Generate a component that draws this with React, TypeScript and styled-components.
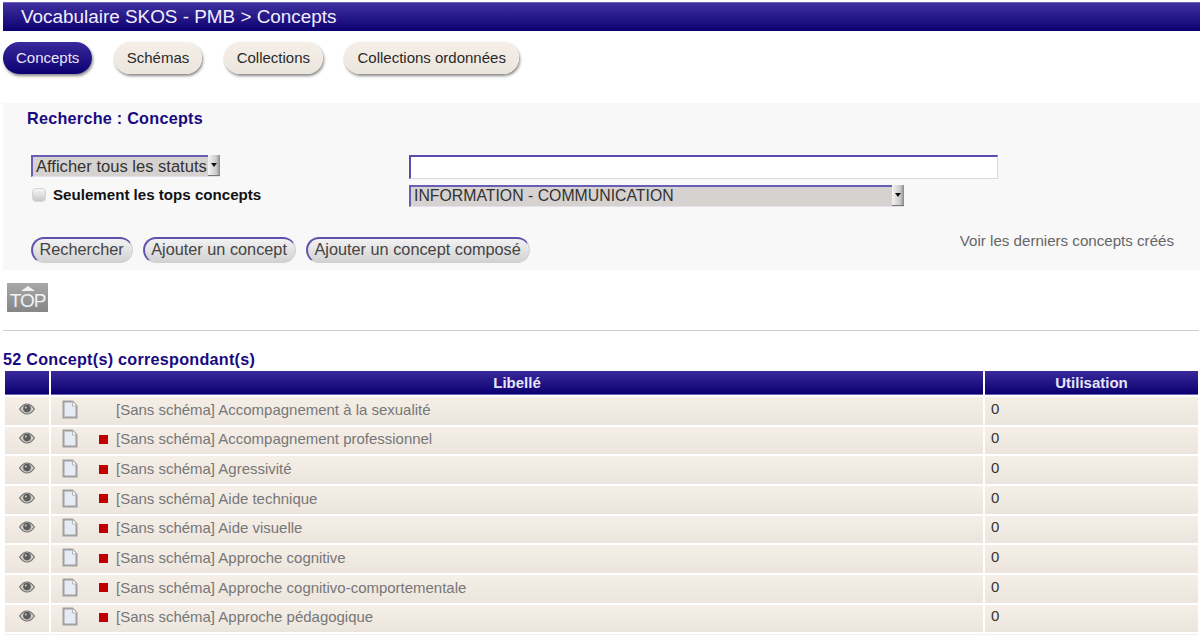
import React, { FC } from 'react';
import styled, { createGlobalStyle } from 'styled-components';

const GlobalStyle = createGlobalStyle`
  html, body {
    margin: 0;
    padding: 0;
    background: #fff;
    overflow: hidden;
  }
  body {
    font-family: "Liberation Sans", Arial, sans-serif;
  }
`;

const Page = styled.div`
  height: 635px;
  overflow: hidden;
  padding: 2px 0 0 3px;
  box-sizing: border-box;
`;

const TitleBar = styled.div`
  height: 29px;
  line-height: 28px;
  padding-left: 18px;
  font-size: 18.9px;
  color: #f0eeff;
  background: linear-gradient(#40309f, #0c0070);
  border-top: 1px solid #6f63bd;
  box-sizing: border-box;
`;

const Tabs = styled.nav`
  display: flex;
  gap: 21.4px;
  margin-top: 11px;
`;

const Tab = styled.a<{ $active?: boolean }>`
  display: block;
  height: 32px;
  line-height: 31px;
  padding: 0 13px;
  font-size: 15px;
  border-radius: 16px;
  box-sizing: border-box;
  color: ${(p) => (p.$active ? '#e8e6f8' : '#2a2a2a')};
  background: ${(p) =>
    p.$active ? 'linear-gradient(#3a2a9c, #0c0070)' : 'linear-gradient(#f5efe8, #ebe5de)'};
  box-shadow: 1px 2px 3px #888;
`;

const SearchPanel = styled.section`
  margin-top: 29px;
  height: 167px;
  box-sizing: border-box;
  padding: 6px 26px 0 24px;
  background: #f8f8f8;
`;

const PanelTitle = styled.h3`
  margin: 0;
  font-size: 16.2px;
  line-height: 18px;
  font-weight: bold;
  letter-spacing: 0.25px;
  color: #1a0a80;
`;

const FormGrid = styled.div`
  display: grid;
  grid-template-columns: 378px 1fr;
  row-gap: 6px;
  margin: 28px 0 0 4px;
`;

const SelectBox = styled.div<{ $width: number; $size: number; $line: number }>`
  display: flex;
  justify-content: space-between;
  width: ${(p) => p.$width}px;
  height: 22px;
  box-sizing: border-box;
  background: #d6d2d0;
  border-top: 2px solid #6a5db5;
  border-left: 2px solid #6a5db5;
  border-bottom: 1px solid #e2e0ea;
  font-size: ${(p) => p.$size}px;
  color: #333;
  line-height: ${(p) => p.$line}px;
  padding-left: 3px;
`;

const SelectArrow = styled.span`
  display: flex;
  align-items: center;
  justify-content: center;
  width: 12px;
  margin-top: -2px;
  background: linear-gradient(90deg, #f4f4f4, #c8c8c8 70%, #8a8a8a);
  border-bottom: 1px solid #777;
  &::before {
    content: '';
    border-left: 3px solid transparent;
    border-right: 3px solid transparent;
    border-top: 4px solid #111;
  }
`;

const TextField = styled.input`
  display: block;
  width: 589px;
  height: 24px;
  box-sizing: border-box;
  background: #fff;
  border: 1px solid #d8d8e2;
  border-top: 2px solid #5a4cab;
  border-left: 2px solid #5a4cab;
  outline: none;
  padding: 0;
`;

const CheckRow = styled.label`
  display: flex;
  align-items: center;
  height: 21px;
  box-sizing: border-box;
  padding-bottom: 2px;
  font-size: 15.12px;
  font-weight: bold;
  color: #111;
`;

const CheckBox = styled.input`
  appearance: none;
  flex: none;
  width: 14px;
  height: 14px;
  margin: 0 7px 0 1px;
  box-sizing: border-box;
  border-radius: 4px;
  border: 1px solid #d4d4d4;
  background: linear-gradient(#f6f6f6, #c8c8c8);
`;

const ActionRow = styled.div`
  display: flex;
  justify-content: space-between;
  margin: 30px 0 0 4px;
`;

const ButtonGroup = styled.div`
  display: flex;
  gap: 9.5px;
`;

const ActionButton = styled.button`
  height: 26px;
  padding: 0 8.5px 2px 6.5px;
  box-sizing: border-box;
  border-radius: 13px;
  border: 1px solid #d0d0d0;
  border-top: 2px solid #5f52ad;
  border-left: 2px solid #5f52ad;
  background: linear-gradient(#f2f2f2, #d2d2d2);
  font-family: inherit;
  font-size: 16.3px;
  color: #444;
  white-space: nowrap;
`;

const RecentLink = styled.a`
  font-size: 15.12px;
  line-height: 20px;
  margin-top: -6px;
  color: #666;
`;

const TopLink = styled.a`
  display: flex;
  flex-direction: column;
  align-items: center;
  width: 41px;
  height: 29px;
  margin: 13px 0 0 4px;
  box-sizing: border-box;
  padding-top: 3px;
  background: linear-gradient(#a8a8a8, #868686);
  color: #f2f2f2;
  font-size: 19px;
  line-height: 18px;
  letter-spacing: -1px;
  &::before {
    content: '';
    border-left: 7px solid transparent;
    border-right: 7px solid transparent;
    border-bottom: 5px solid #f2f2f2;
    margin-bottom: 1px;
  }
`;

const Divider = styled.hr`
  height: 1px;
  border: 0;
  margin: 18px 1px 0 0;
  background: #ccc;
`;

const ResultCount = styled.h3`
  margin: 19px 0 0;
  font-size: 16.2px;
  line-height: 18px;
  font-weight: bold;
  letter-spacing: 0.25px;
  color: #1a0a80;
`;

const Table = styled.table`
  width: 1197px;
  margin-top: 1px;
  table-layout: fixed;
  border-collapse: separate;
  border-spacing: 2px;
`;

const HeadCell = styled.th`
  height: 24px;
  padding: 0 0 1px;
  font-size: 15px;
  font-weight: bold;
  color: #e6e4f8;
  background: linear-gradient(#3a2a9c, #0c0070);
  border-bottom: 1px solid #6f63bd;
  box-sizing: border-box;
`;

const Cell = styled.td`
  height: 27.67px;
  padding: 0;
  box-sizing: border-box;
  background: linear-gradient(#f5efe8, #ebe5de);
  font-size: 14.976px;
  color: #777;
  vertical-align: middle;
`;

const IconCell = styled(Cell)`
  text-align: center;
  line-height: 0;
  padding-bottom: 4px;
`;

const LabelRow = styled.div`
  display: flex;
  align-items: center;
  height: 100%;
  padding: 0 0 3px 10px;
`;

const DocIcon = styled.svg`
  flex: none;
  width: 18px;
  height: 19px;
`;

const StatusSlot = styled.span<{ $flagged?: boolean }>`
  flex: none;
  width: 9px;
  height: 9px;
  margin: 1px 8px 0 20px;
  background: ${(p) => (p.$flagged ? '#c00000' : 'transparent')};
`;

const UsageCount = styled.span`
  display: block;
  padding: 0 0 5px 6px;
  color: #333;
`;

const Eye: FC = () => (
  <svg width="16" height="12" viewBox="0 0 16 12">
    <path d="M.5 6C3 2.4 5.4 1 8 1s5 1.4 7.5 5C13 9.6 10.6 11 8 11S3 9.6.5 6z" fill="#d0ccc6" stroke="#707070" strokeWidth="1.1" />
    <circle cx="8" cy="5.6" r="3.8" fill="#5c5c5c" />
    <circle cx="6.8" cy="4.4" r="1" fill="#ccc" />
  </svg>
);

const Doc: FC = () => (
  <DocIcon viewBox="0 0 18 19">
    <path d="M2.5 1.5h9l4 4.5v11.5h-13z" fill="#e6ebf4" stroke="#a0a0a0" strokeWidth="2" />
    <path d="M11.5 1.5V6h4" fill="#fff" stroke="#b4b4b4" strokeWidth="1" />
  </DocIcon>
);

const rows = [
  { label: 'Accompagnement à la sexualité', flagged: false },
  { label: 'Accompagnement professionnel', flagged: true },
  { label: 'Agressivité', flagged: true },
  { label: 'Aide technique', flagged: true },
  { label: 'Aide visuelle', flagged: true },
  { label: 'Approche cognitive', flagged: true },
  { label: 'Approche cognitivo-comportementale', flagged: true },
  { label: 'Approche pédagogique', flagged: true },
];

const App: FC = () => {
  return (
    <Page>
      <GlobalStyle />
      <TitleBar>Vocabulaire SKOS - PMB &gt; Concepts</TitleBar>
      <Tabs>
        <Tab $active>Concepts</Tab>
        <Tab>Schémas</Tab>
        <Tab>Collections</Tab>
        <Tab>Collections ordonnées</Tab>
      </Tabs>

      <SearchPanel>
        <PanelTitle>Recherche : Concepts</PanelTitle>
        <FormGrid>
          <SelectBox $width={189} $size={16.56} $line={19}>
            Afficher tous les statuts
            <SelectArrow />
          </SelectBox>
          <TextField type="text" />
          <CheckRow>
            <CheckBox type="checkbox" />
            Seulement les tops concepts
          </CheckRow>
          <SelectBox $width={495} $size={15.84} $line={18}>
            INFORMATION - COMMUNICATION
            <SelectArrow />
          </SelectBox>
        </FormGrid>
        <ActionRow>
          <ButtonGroup>
            <ActionButton>Rechercher</ActionButton>
            <ActionButton>Ajouter un concept</ActionButton>
            <ActionButton>Ajouter un concept composé</ActionButton>
          </ButtonGroup>
          <RecentLink>Voir les derniers concepts créés</RecentLink>
        </ActionRow>
      </SearchPanel>

      <TopLink>TOP</TopLink>
      <Divider />
      <ResultCount>52 Concept(s) correspondant(s)</ResultCount>
      <Table>
        <colgroup>
          <col style={{ width: 44 }} />
          <col />
          <col style={{ width: 213 }} />
        </colgroup>
        <thead>
          <tr>
            <HeadCell />
            <HeadCell>Libellé</HeadCell>
            <HeadCell>Utilisation</HeadCell>
          </tr>
        </thead>
        <tbody>
          {rows.map((row) => (
            <tr key={row.label}>
              <IconCell>
                <Eye />
              </IconCell>
              <Cell>
                <LabelRow>
                  <Doc />
                  <StatusSlot $flagged={row.flagged} />
                  [Sans schéma] {row.label}
                </LabelRow>
              </Cell>
              <Cell>
                <UsageCount>0</UsageCount>
              </Cell>
            </tr>
          ))}
          <tr>
            <Cell />
            <Cell />
            <Cell />
          </tr>
        </tbody>
      </Table>
    </Page>
  );
};

export default App;
